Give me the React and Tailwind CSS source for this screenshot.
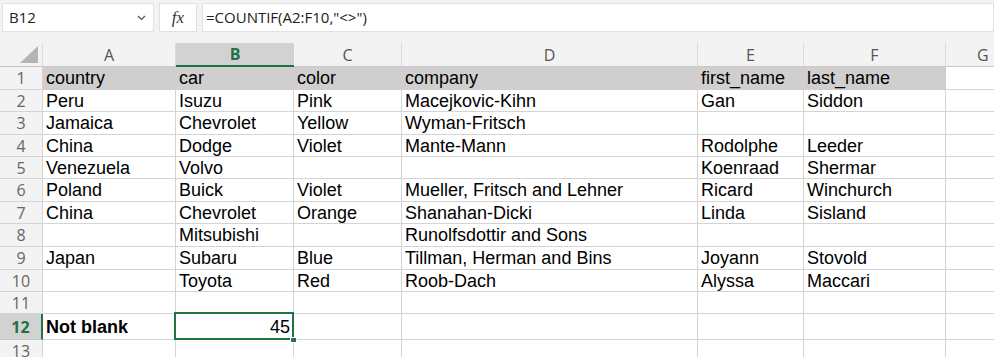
// Spreadsheet view: COUNTIF example
const cols = [
  { key: "A", w: "w-[133px]" },
  { key: "B", w: "w-[118px]" },
  { key: "C", w: "w-[108px]" },
  { key: "D", w: "w-[296px]" },
  { key: "E", w: "w-[106px]" },
  { key: "F", w: "w-[142px]" },
];

const rows = [
  { n: 1, h: "h-[23px]", cells: ["country", "car", "color", "company", "first_name", "last_name"] },
  { n: 2, h: "h-[22px]", cells: ["Peru", "Isuzu", "Pink", "Macejkovic-Kihn", "Gan", "Siddon"] },
  { n: 3, h: "h-[23px]", cells: ["Jamaica", "Chevrolet", "Yellow", "Wyman-Fritsch", "", ""] },
  { n: 4, h: "h-[22px]", cells: ["China", "Dodge", "Violet", "Mante-Mann", "Rodolphe", "Leeder"] },
  { n: 5, h: "h-[22px]", cells: ["Venezuela", "Volvo", "", "", "Koenraad", "Shermar"] },
  { n: 6, h: "h-[23px]", cells: ["Poland", "Buick", "Violet", "Mueller, Fritsch and Lehner", "Ricard", "Winchurch"] },
  { n: 7, h: "h-[22px]", cells: ["China", "Chevrolet", "Orange", "Shanahan-Dicki", "Linda", "Sisland"] },
  { n: 8, h: "h-[23px]", cells: ["", "Mitsubishi", "", "Runolfsdottir and Sons", "", ""] },
  { n: 9, h: "h-[23px]", cells: ["Japan", "Subaru", "Blue", "Tillman, Herman and Bins", "Joyann", "Stovold"] },
  { n: 10, h: "h-[22px]", cells: ["", "Toyota", "Red", "Roob-Dach", "Alyssa", "Maccari"] },
  { n: 11, h: "h-[22px]", cells: ["", "", "", "", "", ""] },
];

const ui = { fontFamily: '"Open Sans", "Noto Sans", sans-serif' };
const cellFont = { fontFamily: '"Liberation Sans", Arial, sans-serif' };

function RowHead({ n, active }) {
  return (
    <div
      className={
        "w-[43px] shrink-0 flex items-center justify-center text-[16px] leading-none border-b " +
        (active
          ? "bg-[#d2d2d2] text-[#217346] font-bold border-r-2 border-r-[#217346] border-b-[#c8c8c8]"
          : "bg-[#f3f3f3] text-[#666] border-r border-[#d4d4d4]")
      }
      style={ui}
    >
      {n}
    </div>
  );
}

export default function App() {
  return (
    <div className="w-[994px] h-[357px] overflow-hidden bg-white flex flex-col">
      {/* formula bar */}
      <div className="h-[34px] shrink-0 bg-[#f3f3f3] flex items-start pt-[3px] gap-[5px] pl-[2px]" style={ui}>
        <div className="w-[152px] h-[29px] bg-white border border-[#e1e1e1] flex items-center justify-between pl-[6px] pr-[7px] text-[15px] text-[#222]">
          <span>B12</span>
          <svg width="9" height="6" viewBox="0 0 9 6" fill="none" stroke="#555" strokeWidth="1.2">
            <path d="M1 1l3.5 3.5L8 1" />
          </svg>
        </div>
        <div className="w-[38px] h-[29px] bg-white border border-[#e1e1e1] flex items-center justify-center">
          <span className="italic text-[17px] text-[#333]" style={{ fontFamily: '"Liberation Serif", serif' }}>
            fx
          </span>
        </div>
        <div className="flex-1 h-[29px] bg-white border border-[#e1e1e1] flex items-center pl-[3px] text-[15px] text-[#222]">
          =COUNTIF(A2:F10,"&lt;&gt;")
        </div>
      </div>
      <div className="h-[9px] shrink-0 bg-[#f3f3f3]" />

      {/* column header */}
      <div className="h-[24px] shrink-0 flex bg-[#f3f3f3] border-b border-[#c8c8c8]" style={ui}>
        <div className="w-[43px] shrink-0 border-r border-[#dadada] flex items-end justify-end pr-[4px] pb-[3px]">
          <svg width="18" height="17" viewBox="0 0 18 17">
            <polygon points="18,0 18,17 0,17" fill="#b4b4b4" />
          </svg>
        </div>
        {cols.map((c) =>
          c.key === "B" ? (
            <div
              key={c.key}
              className={c.w + " shrink-0 bg-[#d2d2d2] border-b-2 border-[#217346] -mb-px flex items-center justify-center text-[16px] font-bold text-[#217346]"}
            >
              {c.key}
            </div>
          ) : (
            <div
              key={c.key}
              className={c.w + " shrink-0 border-r border-[#dadada] flex items-center justify-center text-[16px] text-[#555]"}
            >
              {c.key}
            </div>
          )
        )}
        <div className="flex-1 pl-[31px] flex items-center text-[16px] text-[#555]">G</div>
      </div>

      {/* grid */}
      <div className="flex-1 flex flex-col text-[18px] leading-none text-black" style={cellFont}>
        {rows.map((r) => (
          <div key={r.n} className={r.h + " shrink-0 flex"}>
            <RowHead n={r.n} />
            {cols.map((c, i) => (
              <div
                key={c.key}
                className={
                  c.w +
                  " shrink-0 flex items-center px-[3px] whitespace-nowrap border-b border-r " +
                  (r.n === 1 ? "bg-[#d0cece] border-[#d0cece]" : "border-[#d4d4d4]")
                }
              >
                {r.cells[i]}
              </div>
            ))}
            <div className="flex-1 border-b border-[#d4d4d4]" />
          </div>
        ))}

        {/* row 12 */}
        <div className="h-[26px] shrink-0 flex">
          <RowHead n={12} active />
          <div className="w-[133px] shrink-0 flex items-center px-[3px] font-bold border-b border-r border-[#d4d4d4]">
            Not blank
          </div>
          <div className="w-[118px] shrink-0 relative flex items-center justify-end px-[3px] border-b border-r border-[#d4d4d4]">
            45
            <div className="absolute -left-[2px] -top-[2px] -right-[1px] -bottom-px border-2 border-[#217346]" />
            <div className="absolute -right-[4px] -bottom-[4px] w-[7px] h-[6px] bg-[#217346] border border-white" />
          </div>
          {cols.slice(2).map((c) => (
            <div key={c.key} className={c.w + " shrink-0 border-b border-r border-[#d4d4d4]"} />
          ))}
          <div className="flex-1 border-b border-[#d4d4d4]" />
        </div>

        {/* row 13 */}
        <div className="flex-1 flex">
          <div className="w-[43px] shrink-0 flex items-start justify-center pt-[3px] text-[16px] leading-none text-[#666] bg-[#f3f3f3] border-r border-[#d4d4d4]" style={ui}>
            13
          </div>
          {cols.map((c) => (
            <div key={c.key} className={c.w + " shrink-0 border-r border-[#d4d4d4]"} />
          ))}
        </div>
      </div>
    </div>
  );
}
